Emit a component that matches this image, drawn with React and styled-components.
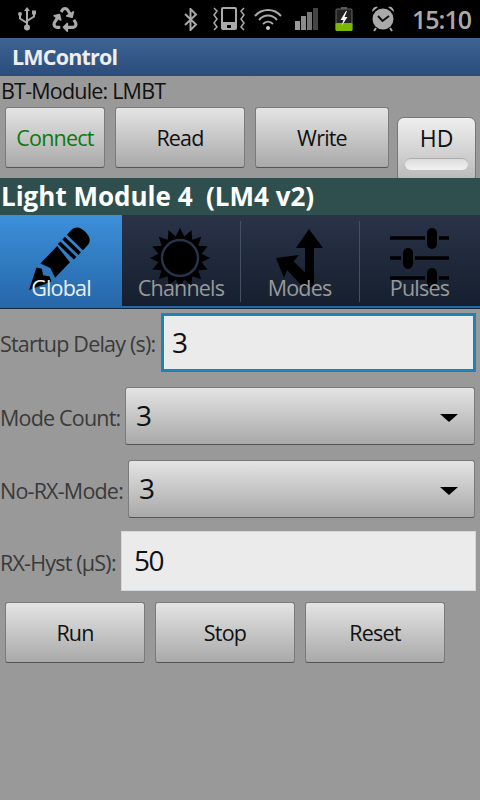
import React from "react";
import styled, { createGlobalStyle } from "styled-components";
import { FaRecycle } from "react-icons/fa";

const GlobalStyle = createGlobalStyle`
  html, body {
    margin: 0;
    padding: 0;
    background: #999;
  }
  * {
    box-sizing: border-box;
  }
`;

const sunPoints = () => {
  const pts = [];
  for (let i = 0; i < 32; i++) {
    const r = i % 2 === 0 ? 30 : 22;
    const a = (i * Math.PI) / 16 - Math.PI / 2;
    pts.push(`${(58 + r * Math.cos(a)).toFixed(1)},${(43 + r * Math.sin(a)).toFixed(1)}`);
  }
  return pts.join(" ");
};

const PencilIcon = () => (
  <TabIcon viewBox="0 0 122 91">
    <g transform="translate(29 75) rotate(-46) scale(0.93)">
      <path d="M0 0 L23 -11 L26 -6 L22 0 L26 6 L23 11 Z" fill="#000" />
      <path d="M29 -11 H55 L52 11 H29 L33 0 Z" fill="#000" />
      <path d="M57 -12 H61 V12 H57 Z" fill="#000" />
      <path d="M64 -12 H68 V12 H64 Z" fill="#000" />
      <path d="M71 -12 H78 C85 -12 87 -6 87 0 C87 6 85 12 78 12 H71 Z" fill="#000" />
    </g>
  </TabIcon>
);

const SunIcon = () => (
  <TabIcon viewBox="0 0 118 91">
    <polygon points={sunPoints()} fill="#000" />
    <circle cx="58" cy="43" r="18" fill="#000" stroke="#26334a" strokeWidth="2.5" />
  </TabIcon>
);

const ArrowsIcon = () => (
  <TabIcon viewBox="0 0 119 91">
    <path d="M69 14 L83 33 H74 V72 H65 V33 H56 Z" fill="#000" />
    <path d="M36 43 L59 40 L53.500 46.500 L70 62 V72 H63 L47 55 L44 63 Z" fill="#000" />
  </TabIcon>
);

const SlidersIcon = () => (
  <TabIcon viewBox="0 0 121 91">
    <path d="M31 23 H66 M80 23 H90 M31 43 H42 M56 43 H90 M31 63 H66 M80 63 H90" stroke="#000" strokeWidth="3.500" />
    <rect x="68" y="13" width="10" height="21" rx="5" fill="#000" />
    <rect x="44" y="33" width="10" height="21" rx="5" fill="#000" />
    <rect x="68" y="53" width="10" height="21" rx="5" fill="#000" />
  </TabIcon>
);

const UsbIcon = () => (
  <StatusSvg $gap={0} width="18" height="24" viewBox="0 0 18 24">
    <path d="M9 3 V20" stroke="#aaa" strokeWidth="2" />
    <path d="M9 0 L12 4 H6 Z" fill="#aaa" />
    <circle cx="9" cy="20.500" r="3" fill="#aaa" />
    <path d="M2 8 V11.500 L9 16 M16 6 V9.500 L9 14" stroke="#aaa" strokeWidth="2" fill="none" />
    <circle cx="2" cy="7" r="2" fill="#aaa" />
    <rect x="14" y="3.500" width="4" height="4" fill="#aaa" />
  </StatusSvg>
);

const BluetoothIcon = () => (
  <StatusSvg $gap={0} width="14" height="23" viewBox="0 0 14 23">
    <path d="M1 6 L12 16.500 L6.500 22 V1 L12 6.500 L1 17" stroke="#aaa" strokeWidth="2" fill="none" />
  </StatusSvg>
);

const VibrateIcon = () => (
  <StatusSvg $gap={15} width="32" height="24" viewBox="0 0 32 24">
    <rect x="8" y="0" width="16" height="23" rx="2" fill="#aaa" />
    <rect x="10" y="2" width="12" height="13" fill="#000" />
    <rect x="14" y="18" width="4" height="3" fill="#000" />
    <path d="M1 1 L4 4 L1 8 L4 12 L1 16 L4 20 L1 23 M31 1 L28 4 L31 8 L28 12 L31 16 L28 20 L31 23" stroke="#aaa" strokeWidth="1.500" fill="none" />
  </StatusSvg>
);

const WifiIcon = () => (
  <StatusSvg $gap={9} width="28" height="24" viewBox="0 0 28 24">
    <path d="M1 9 C8 1 20 1 27 9" stroke="#aaa" strokeWidth="2" fill="none" />
    <path d="M5 13 C10 7 18 7 23 13" stroke="#aaa" strokeWidth="2" fill="none" />
    <path d="M9 17 C12 14 16 14 19 17" stroke="#aaa" strokeWidth="2" fill="none" />
    <circle cx="14" cy="21" r="2" fill="#ccc" />
  </StatusSvg>
);

const SignalIcon = () => (
  <StatusSvg $gap={13} width="24" height="24" viewBox="0 0 24 24">
    <rect x="0" y="14" width="5" height="9" fill="#999" />
    <rect x="6" y="9" width="5" height="14" fill="#8c8c8c" />
    <rect x="12" y="5" width="5" height="18" fill="#777" />
    <rect x="18" y="1" width="5" height="22" fill="#444" />
  </StatusSvg>
);

const BatteryIcon = () => (
  <StatusSvg $gap={16} width="18" height="24" viewBox="0 0 18 24">
    <rect x="6" y="0" width="6" height="2" fill="#555" />
    <rect x="1" y="2" width="16" height="21" rx="1" fill="#222" stroke="#666" />
    <rect x="0.500" y="16" width="17" height="8" rx="1" fill="#7bb800" />
    <path d="M11 4 L5.500 13 H8.500 L6.500 19 L12.500 10 H9.500 L12 4 Z" fill="#fff" />
  </StatusSvg>
);

const AlarmIcon = () => (
  <StatusSvg $gap={18} width="24" height="26" viewBox="0 0 24 26">
    <circle cx="12" cy="13" r="10.500" fill="#aaa" />
    <path d="M7 10 L11.500 15 L18 10" stroke="#111" strokeWidth="2" fill="none" />
    <path d="M1 6 C1 2 4 0 7 1 Z M23 6 C23 2 20 0 17 1 Z" fill="#aaa" />
    <path d="M5 22 L3 25 M19 22 L21 25" stroke="#aaa" strokeWidth="2" />
  </StatusSvg>
);

const TABS = [
  { label: "Global", icon: <PencilIcon />, active: true, width: 122 },
  { label: "Channels", icon: <SunIcon />, width: 118 },
  { label: "Modes", icon: <ArrowsIcon />, divider: true, width: 119 },
  { label: "Pulses", icon: <SlidersIcon />, divider: true, width: 121 },
];

const App = () => {
  return (
    <Screen>
      <GlobalStyle />
      <StatusBar>
        <StatusGroup>
          <UsbIcon />
          <RecycleGlyph />
        </StatusGroup>
        <StatusGroup>
          <BluetoothIcon />
          <VibrateIcon />
          <WifiIcon />
          <SignalIcon />
          <BatteryIcon />
          <AlarmIcon />
          <Clock>15:10</Clock>
        </StatusGroup>
      </StatusBar>
      <TitleBar>LMControl</TitleBar>
      <ModuleLine>BT-Module: LMBT</ModuleLine>
      <ActionRow>
        <Button $width={100} $color="#0b7a0b">Connect</Button>
        <Button $width={130}>Read</Button>
        <Button $width={134}>Write</Button>
        <Toggle>
          HD
          <ToggleLight />
        </Toggle>
      </ActionRow>
      <Banner>Light Module 4  (LM4 v2)</Banner>
      <TabBar>
        {TABS.map((tab) => (
          <Tab key={tab.label} $active={tab.active} $divider={tab.divider} $width={tab.width}>
            {tab.icon}
            <TabLabel $active={tab.active}>{tab.label}</TabLabel>
          </Tab>
        ))}
      </TabBar>
      <TabStrip />
      <Row $top={4} $height={59}>
        <Label $width={161}>Startup Delay (s):</Label>
        <Field $focused>3</Field>
      </Row>
      <Row $top={15} $height={58}>
        <Label $width={125}>Mode Count:</Label>
        <Select>
          3
          <Caret />
        </Select>
      </Row>
      <Row $top={15} $height={58}>
        <Label $width={128}>No-RX-Mode:</Label>
        <Select>
          3
          <Caret />
        </Select>
      </Row>
      <Row $top={13} $height={60}>
        <Label $width={121}>RX-Hyst (µS):</Label>
        <Field>50</Field>
      </Row>
      <CommandRow>
        <Button $width={140}>Run</Button>
        <Button $width={140}>Stop</Button>
        <Button $width={140}>Reset</Button>
      </CommandRow>
    </Screen>
  );
};
export default App;

const Screen = styled.div`
  width: 480px;
  height: 800px;
  overflow: hidden;
  background: #999;
  font-family: "Open Sans", "Noto Sans", sans-serif;
  font-size: 21.5px;
  letter-spacing: -0.8px;
`;

const StatusBar = styled.div`
  display: flex;
  justify-content: space-between;
  align-items: center;
  height: 38px;
  padding: 0 9px 0 18px;
  background: #000;
`;

const StatusGroup = styled.div`
  display: flex;
  align-items: center;
`;

const StatusSvg = styled.svg`
  display: block;
  margin-left: ${(p) => p.$gap}px;
`;

const RecycleGlyph = styled(FaRecycle)`
  width: 26px;
  height: 25px;
  margin-left: 16px;
  color: #aaa;
`;

const Clock = styled.div`
  margin-left: 17px;
  font-size: 25px;
  font-weight: 600;
  letter-spacing: -1px;
  color: #aaa;
  line-height: 38px;
`;

const TitleBar = styled.div`
  height: 38px;
  padding-left: 12px;
  background: linear-gradient(#3d6494, #2b4c7a);
  color: #eee;
  font-weight: 700;
  line-height: 37px;
`;

const ModuleLine = styled.div`
  height: 31px;
  padding-left: 1px;
  color: #111;
  line-height: 29px;
`;

const ActionRow = styled.div`
  display: flex;
  height: 71px;
  padding-left: 5px;
  gap: 10px;
  overflow: hidden;
`;

const Button = styled.div`
  display: flex;
  justify-content: center;
  align-items: center;
  flex: none;
  width: ${(p) => p.$width}px;
  height: 61px;
  border: 1px solid #7a7a7a;
  border-bottom-color: #555;
  border-radius: 3px;
  background: linear-gradient(#e4e4e4, #a9a9a9);
  color: ${(p) => p.$color || "#111"};
`;

const Toggle = styled.div`
  display: flex;
  flex-direction: column;
  align-items: center;
  flex: none;
  width: 79px;
  height: 66px;
  margin: 10px 0 0 -2px;
  padding-top: 6px;
  border: 1px solid #777;
  border-radius: 7px;
  background: linear-gradient(#efefef, #b8b8b8);
  color: #111;
  font-size: 23px;
  letter-spacing: 0;
  line-height: 28px;
`;

const ToggleLight = styled.div`
  width: 63px;
  height: 12px;
  margin-top: 6px;
  border-radius: 6px;
  border-top: 1px solid #aaa;
  background: linear-gradient(#dcdcdc, #f2f2f2);
`;

const Banner = styled.div`
  height: 37px;
  padding-left: 1px;
  background: #2f4f4f;
  color: #fff;
  font-size: 26px;
  font-weight: 700;
  letter-spacing: 0;
  line-height: 37px;
  white-space: pre;
`;

const TabBar = styled.div`
  display: flex;
  height: 91px;
  background: linear-gradient(#2a3348, #151f2e);
`;

const Tab = styled.div`
  position: relative;
  flex: none;
  width: ${(p) => p.$width}px;
  background: ${(p) => (p.$active ? "linear-gradient(#3c90da, #2667a9)" : "none")};
  ${(p) =>
    p.$divider &&
    `&::before {
      content: "";
      position: absolute;
      left: 0;
      top: 6px;
      bottom: 4px;
      width: 1px;
      background: #465064;
    }`}
`;

const TabIcon = styled.svg`
  display: block;
  width: 100%;
  height: 100%;
`;

const TabLabel = styled.div`
  position: absolute;
  left: 0;
  right: 0;
  bottom: 4px;
  text-align: center;
  color: ${(p) => (p.$active ? "#eee" : "#999")};
  line-height: 28px;
`;

const TabStrip = styled.div`
  height: 3px;
  background: #2667a9;
  border-bottom: 1px solid #14283c;
`;

const Row = styled.div`
  display: flex;
  align-items: center;
  height: ${(p) => p.$height}px;
  margin-top: ${(p) => p.$top}px;
  padding-right: 4px;
`;

const Label = styled.div`
  flex: none;
  width: ${(p) => p.$width}px;
  padding-top: 2px;
  color: #3a3a3a;
  white-space: nowrap;
`;

const Field = styled.div`
  flex: 1;
  align-self: stretch;
  display: flex;
  align-items: center;
  padding-left: ${(p) => (p.$focused ? 8 : 12)}px;
  padding-bottom: 2px;
  background: #ebebeb;
  border: ${(p) => (p.$focused ? "3px solid #1c83b8" : "1px solid #d2d8dc")};
  color: #111;
  font-size: 28px;
  letter-spacing: -1.5px;
`;

const Select = styled.div`
  position: relative;
  flex: 1;
  align-self: stretch;
  display: flex;
  align-items: center;
  margin-right: 1px;
  padding-left: 10px;
  padding-bottom: 3px;
  border: 1px solid #7a7a7a;
  border-bottom-color: #555;
  border-radius: 3px;
  background: linear-gradient(#e4e4e4, #a9a9a9);
  color: #111;
  font-size: 28px;
`;

const Caret = styled.div`
  position: absolute;
  right: 16px;
  top: 26px;
  width: 0;
  height: 0;
  border-left: 9px solid transparent;
  border-right: 9px solid transparent;
  border-top: 8px solid #000;
`;

const CommandRow = styled.div`
  display: flex;
  gap: 10px;
  margin-top: 11px;
  padding-left: 5px;
`;
